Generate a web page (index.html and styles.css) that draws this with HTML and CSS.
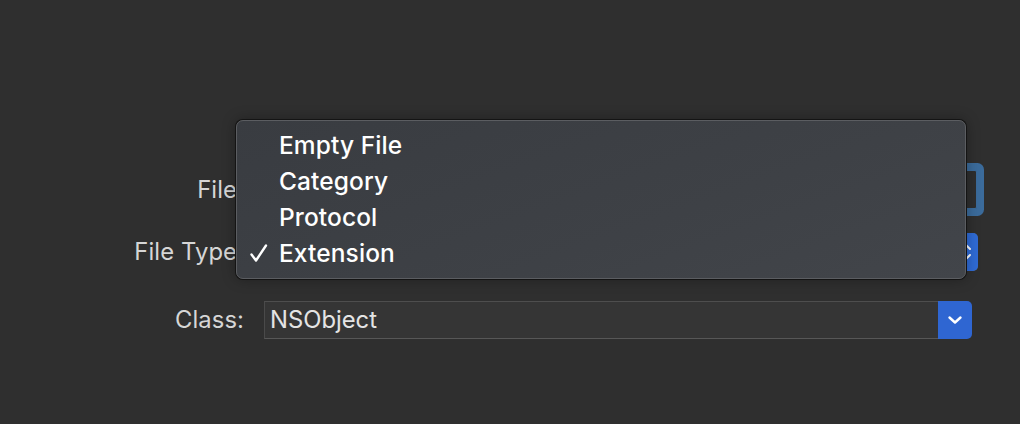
FILE: index.html
```html
<!DOCTYPE html>
<html>
<head>
<meta charset="utf-8">
<link rel="stylesheet" href="styles.css">
</head>
<body>
<div class="sheet">
  <form class="form">
    <div class="label row1">File:</div>
    <div class="field-wrap row1">
      <div class="textfield focused"></div>
    </div>

    <div class="label row2">File Type:</div>
    <div class="field-wrap row2">
      <div class="popup">
        <span class="popup-text"></span>
        <span class="popup-btn">
          <svg width="12" height="24" viewBox="0 0 12 24"><path d="M2 9 L6 5 L10 9 M2 15 L6 19 L10 15" fill="none" stroke="#fff" stroke-width="2" stroke-linecap="round" stroke-linejoin="round"/></svg>
        </span>
      </div>
    </div>

    <div class="label row3">Class:</div>
    <div class="field-wrap row3">
      <div class="combo">
        <span class="combo-text">NSObject</span>
        <span class="combo-btn">
          <svg width="16" height="10" viewBox="0 0 16 10"><path d="M2.5 2.5 L8 7.5 L13.5 2.5" fill="none" stroke="#fff" stroke-width="2.4" stroke-linecap="round" stroke-linejoin="round"/></svg>
        </span>
      </div>
    </div>
  </form>

  <div class="menu">
    <div class="item"><span class="check"></span><span>Empty File</span></div>
    <div class="item"><span class="check"></span><span>Category</span></div>
    <div class="item"><span class="check"></span><span>Protocol</span></div>
    <div class="item"><span class="check">
      <svg width="18" height="20" viewBox="0 0 18 20"><path d="M1.5 10.5 L6 16.5 L16 1.5" fill="none" stroke="#fff" stroke-width="2.4" stroke-linecap="round" stroke-linejoin="round"/></svg>
    </span><span>Extension</span></div>
  </div>
</div>
</body>
</html>
```

FILE: styles.css
```css
html, body {
  margin: 0;
  padding: 0;
  background: #2f2f2f;
  width: 1020px;
  height: 424px;
  overflow: hidden;
  font-family: Inter, "Noto Sans", "Liberation Sans", sans-serif;
}

.sheet {
  position: relative;
  width: 1020px;
  height: 424px;
}

.form {
  display: grid;
  grid-template-columns: 244px 1fr;
  column-gap: 20px;
  padding: 170px 0 0 0;
  margin: 0;
  width: 986px;
  align-items: center;
}

.label {
  text-align: right;
  color: #d6d6d6;
  font-size: 23.8px;
  line-height: 39px;
  letter-spacing: 0.1px;
}

.row1 { grid-row: 1; height: 39px; }
.row2 { grid-row: 2; height: 38px; margin-top: 24px; }
.row3 { grid-row: 3; height: 38px; margin-top: 30px; }

.label.row2, .label.row3 { line-height: 38px; }

.field-wrap {
  display: flex;
  align-items: stretch;
}

.textfield {
  flex: 0 0 713px;
  height: 39px;
  box-sizing: border-box;
  background: #2e2e2e;
  border: 1px solid #4a4a4a;
}

.textfield.focused {
  border-radius: 2px;
  box-shadow: 0 0 0 7px #3b6b9b;
  border-color: #3b6b9b;
}

.popup {
  flex: 0 0 714px;
  height: 38px;
  display: flex;
  background: #5a5a5a;
  border-radius: 5px;
}

.popup-text {
  flex: 1;
}

.popup-btn {
  width: 24px;
  background: #2f6bd6;
  border-radius: 0 5px 5px 0;
  display: flex;
  align-items: center;
  justify-content: center;
}

.combo {
  flex: 0 0 708px;
  height: 38px;
  display: flex;
}

.combo-text {
  flex: 1;
  box-sizing: border-box;
  height: 38px;
  background: #353535;
  border: 1px solid #4a4a4a;
  border-top-color: #4e4e4e;
  border-bottom-color: #575757;
  border-right: none;
  color: #e4e4e4;
  font-size: 23.8px;
  line-height: 36px;
  padding-left: 5px;
}

.combo-btn {
  width: 34px;
  background: #2f66d2;
  border-radius: 0 5px 5px 0;
  display: flex;
  align-items: center;
  justify-content: center;
}

.menu {
  position: absolute;
  left: 236px;
  top: 120px;
  width: 730px;
  height: 159px;
  box-sizing: border-box;
  padding: 6px 0 0 0;
  border-radius: 7px;
  border: 1px solid #5b5d61;
  background: linear-gradient(160deg, #393c41 0%, #3e4146 60%, #42454a 100%);
  box-shadow: 0 0 0 1px #141414, 0 0 14px rgba(0, 0, 0, 0.35);
}

.item {
  display: flex;
  align-items: center;
  height: 36px;
  color: #ffffff;
  font-size: 24.5px;
  font-weight: 500;
  letter-spacing: 0.1px;
}

.check {
  width: 42px;
  flex: 0 0 42px;
  display: flex;
  justify-content: flex-end;
  box-sizing: border-box;
}

.check svg {
  margin-right: 11px;
  margin-top: 1px;
}
```
